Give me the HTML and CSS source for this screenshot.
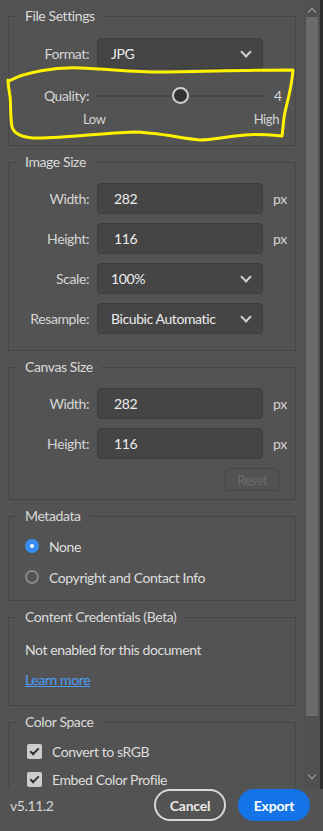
FILE: index.html
```html
<!DOCTYPE html>
<html lang="en">
<head>
  <meta charset="UTF-8" />
  <title>Export As</title>
  <link rel="stylesheet" href="styles.css">
</head>
<body>
  <div class="panel">
    <!-- Scrolling settings area -->
    <div class="scroller">
      <div class="content">
        <fieldset class="group file-settings">
          <legend>File Settings</legend>
          <div class="row">
            <label class="label">Format:</label>
            <div class="select">JPG<span class="chevron"></span></div>
          </div>
          <div class="row quality">
            <label class="label">Quality:</label>
            <div class="slider">
              <span class="track"></span>
              <span class="thumb"></span>
              <span class="track"></span>
            </div>
            <span class="unit">4</span>
          </div>
          <div class="range-labels">
            <span>Low</span>
            <span>High</span>
          </div>
        </fieldset>

        <fieldset class="group image-size">
          <legend>Image Size</legend>
          <div class="row">
            <label class="label">Width:</label>
            <div class="input">282</div>
            <span class="unit">px</span>
          </div>
          <div class="row">
            <label class="label">Height:</label>
            <div class="input">116</div>
            <span class="unit">px</span>
          </div>
          <div class="row">
            <label class="label">Scale:</label>
            <div class="select">100%<span class="chevron"></span></div>
          </div>
          <div class="row">
            <label class="label">Resample:</label>
            <div class="select">Bicubic Automatic<span class="chevron"></span></div>
          </div>
        </fieldset>

        <fieldset class="group canvas-size">
          <legend>Canvas Size</legend>
          <div class="row">
            <label class="label">Width:</label>
            <div class="input">282</div>
            <span class="unit">px</span>
          </div>
          <div class="row">
            <label class="label">Height:</label>
            <div class="input">116</div>
            <span class="unit">px</span>
          </div>
          <div class="reset-row">
            <button class="reset" disabled>Reset</button>
          </div>
        </fieldset>

        <fieldset class="group metadata">
          <legend>Metadata</legend>
          <div class="option"><span class="radio checked"></span>None</div>
          <div class="option"><span class="radio"></span>Copyright and Contact Info</div>
        </fieldset>

        <fieldset class="group credentials">
          <legend>Content Credentials (Beta)</legend>
          <p class="note">Not enabled for this document</p>
          <a class="link" href="#">Learn more</a>
        </fieldset>

        <fieldset class="group color-space">
          <legend>Color Space</legend>
          <div class="check-row"><span class="checkbox"></span>Convert to sRGB</div>
          <div class="check-row"><span class="checkbox"></span>Embed Color Profile</div>
        </fieldset>
      </div>

      <!-- Fake scrollbar -->
      <div class="scrollbar">
        <span class="arrow up"></span>
        <div class="scroll-thumb"></div>
        <span class="arrow down"></span>
      </div>
      <div class="edge"></div>
    </div>

    <!-- Footer with version and actions -->
    <div class="footer">
      <span class="version">v5.11.2</span>
      <button class="btn cancel">Cancel</button>
      <button class="btn export">Export</button>
    </div>

    <!-- Hand-drawn highlight around the quality slider -->
    <svg class="scribble" width="323" height="160" viewBox="0 0 323 160">
      <path d="M9 81 C 25 72, 55 67, 80 68 C 110 69, 140 73, 168 72 C 210 71, 260 70, 293 70 C 292 85, 288 100, 285 112 C 283 122, 283 130, 282 136 C 270 135, 255 134, 245 135 C 225 137, 210 140, 200 140 C 180 138, 155 132, 133 132 C 100 133, 60 139, 33 138 C 20 137, 14 133, 12 127 C 10 115, 11 104, 10 96 C 9 90, 8 85, 8 80"
            fill="none" stroke="#fff200" stroke-width="3" stroke-linecap="round" stroke-linejoin="round" />
    </svg>
  </div>
</body>
</html>
```

FILE: styles.css
```css
/* Reset and base panel colours */
html, body {
  margin: 0;
  padding: 0;
  overflow: hidden;
}

body {
  width: 323px;
  height: 831px;
  background-color: #535353;
  color: #d6d6d6;
  font-family: 'Lato', 'Open Sans', sans-serif;
  font-size: 14px;
  letter-spacing: -0.4px;
}

.panel {
  position: relative;
  width: 323px;
  height: 831px;
}

/* Scroll area */
.scroller {
  display: flex;
  height: 789px;
  overflow: hidden;
}

.content {
  width: 304px;
  flex-shrink: 0;
}

/* Group boxes */
.group {
  margin: 7px 8px 0 8px;
  padding: 12px 0 16px 0;
  border: 1px solid #474747;
  min-width: 0;
}

.group legend {
  margin-left: 8px;
  padding: 0 8px;
  line-height: 18px;
  font-size: 14px;
  color: #dadada;
}

.file-settings {
  padding-top: 13px;
  padding-bottom: 18px;
}

.canvas-size {
  padding-bottom: 8px;
}

.metadata {
  padding-bottom: 14px;
}

.credentials {
  padding-bottom: 15px;
}

/* Label + control rows */
.row {
  display: flex;
  align-items: center;
  height: 31px;
  margin-bottom: 9px;
}

.row:last-of-type {
  margin-bottom: 0;
}

.label {
  width: 80px;
  text-align: right;
  margin-right: 8px;
  color: #d6d6d6;
}

.select,
.input {
  box-sizing: border-box;
  width: 166px;
  height: 31px;
  display: flex;
  align-items: center;
  background-color: #454545;
  border: 1px solid #3d3d3d;
  border-radius: 4px;
  color: #ececec;
}

.select {
  padding-left: 13px;
  justify-content: space-between;
  padding-right: 12px;
}

.input {
  padding-left: 16px;
}

.chevron {
  width: 6px;
  height: 6px;
  border-right: 2px solid #cfcfcf;
  border-bottom: 2px solid #cfcfcf;
  transform: translateY(-2px) rotate(45deg);
}

.unit {
  margin-left: 10px;
  color: #d6d6d6;
}

/* Quality slider */
.row.quality {
  margin-top: 11px;
  margin-bottom: 0;
}

.slider {
  width: 166px;
  display: flex;
  align-items: center;
}

.slider .track {
  flex: 1;
  height: 2px;
  background-color: #464646;
}

.slider .thumb {
  box-sizing: border-box;
  width: 17px;
  height: 17px;
  margin: 0 2px;
  border: 2px solid #cfcfcf;
  border-radius: 50%;
  background-color: #323232;
}

.quality .unit {
  margin-left: 11px;
}

.range-labels {
  display: flex;
  justify-content: space-between;
  margin-left: 74px;
  width: 196px;
  line-height: 16px;
  font-size: 13px;
  color: #d6d6d6;
}

/* Reset button */
.reset-row {
  display: flex;
  justify-content: flex-end;
  margin-top: 9px;
  padding-right: 16px;
}

.reset {
  width: 54px;
  height: 23px;
  background: none;
  border: 1px solid #484848;
  border-radius: 3px;
  color: #6b6b6b;
  font-family: inherit;
  font-size: 13px;
  letter-spacing: -0.4px;
  padding: 0;
}

/* Radio options */
.option {
  display: flex;
  align-items: center;
  height: 18px;
  padding-left: 16px;
  margin-bottom: 13px;
  color: #dedede;
}

.option:last-child {
  margin-bottom: 0;
}

.radio {
  box-sizing: border-box;
  width: 14px;
  height: 14px;
  margin-right: 10px;
  border: 2px solid #888888;
  border-radius: 50%;
}

.radio.checked {
  border: 5px solid #378ef0;
  background-color: #ffffff;
}

/* Content credentials */
.note {
  margin: 2px 0 0 16px;
  line-height: 20px;
  color: #dedede;
}

.link {
  display: block;
  margin: 10px 0 0 16px;
  line-height: 20px;
  color: #4b9cf5;
  text-decoration: underline;
}

/* Checkboxes */
.check-row {
  display: flex;
  align-items: center;
  height: 16px;
  padding-left: 18px;
  margin-bottom: 12px;
  color: #dedede;
}

.checkbox {
  position: relative;
  box-sizing: border-box;
  width: 15px;
  height: 15px;
  margin-right: 10px;
  background-color: #cdcdcd;
  border-radius: 2px;
}

.checkbox::after {
  content: '';
  position: absolute;
  left: 5px;
  top: 2px;
  width: 3px;
  height: 7px;
  border-right: 2px solid #333333;
  border-bottom: 2px solid #333333;
  transform: rotate(45deg);
}

/* Scrollbar */
.scrollbar {
  width: 16px;
  background-color: #505050;
  display: flex;
  flex-direction: column;
  align-items: center;
}

.arrow {
  width: 5px;
  height: 5px;
  border-left: 1.5px solid #a8a8a8;
  border-top: 1.5px solid #a8a8a8;
}

.arrow.up {
  margin: 9px 0 0 0;
  transform: rotate(45deg);
}

.arrow.down {
  margin-top: 56px;
  transform: rotate(225deg);
}

.scroll-thumb {
  width: 12px;
  height: 699px;
  margin-top: 2px;
  background-color: #6b6b6b;
}

.edge {
  width: 3px;
  background-color: #2d2d2d;
}

/* Footer */
.footer {
  display: flex;
  align-items: center;
  height: 32px;
  padding: 0 13px 0 10px;
}

.version {
  flex: 1;
  color: #d6d6d6;
}

.btn {
  box-sizing: border-box;
  width: 72px;
  height: 32px;
  border-radius: 16px;
  font-family: inherit;
  font-size: 14px;
  font-weight: bold;
  letter-spacing: -0.2px;
  color: #ffffff;
  padding: 0;
}

.cancel {
  background: none;
  border: 2px solid #d8d8d8;
  color: #e8e8e8;
}

.export {
  margin-left: 12px;
  border: none;
  background-color: #1473e6;
}

/* Highlight overlay */
.scribble {
  position: absolute;
  top: 0;
  left: 0;
  pointer-events: none;
}
```
